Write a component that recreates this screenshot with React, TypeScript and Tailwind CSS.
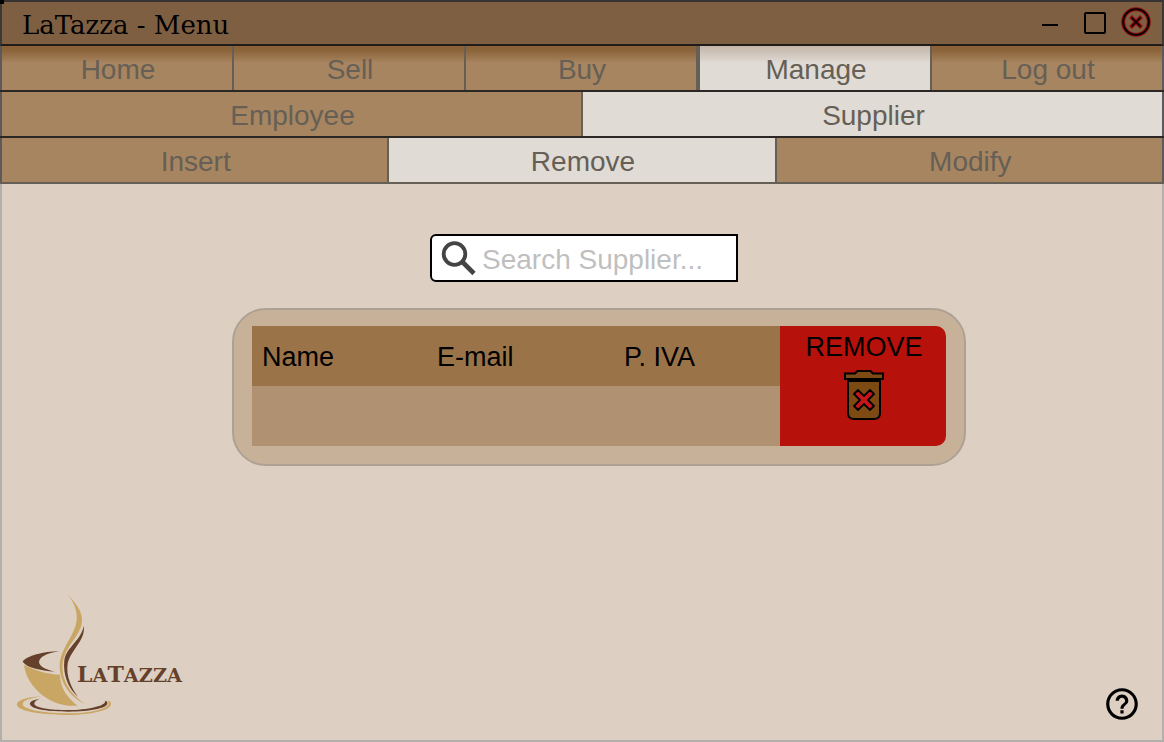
import type { ReactNode } from "react";
import { MdHelpOutline } from "react-icons/md";

type TabProps = {
  label: string;
  active?: boolean;
  shaded?: boolean;
  edge?: "left" | "right" | "none";
};

function Tab({ label, active = false, shaded = false, edge = "none" }: TabProps) {
  const fill = active ? "bg-[#e0dbd5]" : "bg-[#a78560]";
  const shade = !shaded
    ? ""
    : active
      ? "bg-[linear-gradient(to_bottom,#c7b8ab_0px,#cbbfb4_5px,#e0dbd5_17px)]"
      : "bg-[linear-gradient(to_bottom,#8a6136_0px,#8d653b_5px,#a78560_17px)]";
  const border =
    edge === "left" ? "border-l-2" : edge === "right" ? "border-r-2" : "";
  return (
    <button
      type="button"
      aria-pressed={active}
      className={`h-11 min-w-0 flex-1 border-[#665f56] pt-1 pl-0.5 text-center text-[28px] leading-10 text-[#665f56] ${fill} ${shade} ${border}`}
    >
      {label}
    </button>
  );
}

function TabRow({ last = false, children }: { last?: boolean; children: ReactNode }) {
  return (
    <div className={`border-b-2 ${last ? "border-[#665f56]" : "border-[#2b2725]"}`}>
      <div className="flex border-x-2 border-[#5c5a5a]">{children}</div>
    </div>
  );
}

function SearchIcon() {
  return (
    <svg width="46" height="44" viewBox="0 0 46 44" fill="none" stroke="#444" className="shrink-0" aria-hidden="true">
      <circle cx="18.500" cy="18" r="10.800" strokeWidth="3.800" />
      <path d="M26.500 26L38 37.500" strokeWidth="4.600" />
    </svg>
  );
}

function TrashIcon() {
  return (
    <svg width="42" height="52" viewBox="0 0 42 52" fill="#7c4a12" stroke="#000" strokeWidth="2" aria-hidden="true">
      <path d="M2 4.500H12L14.500 2H27.500L30 4.500H40V10H2Z" />
      <path d="M5 12H37V44Q37 50 31 50H11Q5 50 5 44Z" />
      <path
        d="M11 25L15 21L21 27L27 21L31 25L25 31L31 37L27 41L21 35L15 41L11 37L17 31Z"
        fill="#c4161c"
        strokeWidth="1.800"
      />
    </svg>
  );
}

function CloseIcon() {
  return (
    <svg width="30" height="30" viewBox="0 0 30 30" fill="none" aria-hidden="true">
      <circle cx="15" cy="15" r="12.800" stroke="#8e0c0c" strokeWidth="4" />
      <circle cx="15" cy="15" r="12.800" stroke="#000" strokeWidth="1.800" />
      <path d="M9.500 9.500L20.500 20.500M20.500 9.500L9.500 20.500" stroke="#8e0c0c" strokeWidth="4" />
      <path d="M10.500 10.500L19.500 19.500M19.500 10.500L10.500 19.500" stroke="#000" strokeWidth="1.500" />
    </svg>
  );
}

function Logo() {
  return (
    <svg width="168" height="123" viewBox="48 24 504 369" role="img" aria-label="LaTazza">
      <g fill="#c9a664">
        <path d="M202 26C224 52 248 76 246 107C244 152 194 182 188 235C183 290 215 330 256 358C208 335 178 290 179 240C181 190 226 150 230 105C233 75 220 50 202 26Z" />
        <path d="M72 240C110 258 140 268 180 269C180 310 205 340 232 362C190 365 150 352 115 320C90 295 76 270 72 240Z" />
        <path d="M125 334C70 338 50 348 51 360C55 380 130 390 205 390C280 389 333 375 333 357C333 350 328 347 323 347C340 370 275 385 200 385C120 384 68 372 68 357C68 347 90 340 125 334Z" />
      </g>
      <g fill="#65402a">
        <path d="M251 122C258 165 215 190 203 235C197 275 215 310 234 336C205 310 188 270 193 225C200 185 245 165 251 122Z" />
        <path d="M68 230C80 212 130 200 178 198C140 205 118 215 117 232C118 245 140 255 165 260C120 256 80 248 68 230Z" />
        <path d="M120 341C95 345 88 352 90 358C95 374 150 380 205 380C270 380 322 370 322 355C322 350 320 347 315 347C322 362 260 375 205 375C150 375 104 368 103 356C103 350 108 345 120 341Z" />
        <text x="231" y="291" fontFamily="'DejaVu Serif', serif" fontWeight="700" fontSize="58">
          <tspan fontSize="66">L</tspan>A<tspan fontSize="66">T</tspan>AZZA
        </text>
      </g>
    </svg>
  );
}

export default function App() {
  return (
    <div className="relative flex min-h-screen flex-col bg-[#ddcfc2] font-['Liberation_Sans',Arial,sans-serif] text-black">
      <span className="absolute top-0 left-0 size-1 bg-black" />
      <header className="flex h-[46px] items-center justify-between border-2 border-t-[#353433] border-r-[#3b3938] border-b-[#211c19] border-l-[#3b3938] bg-[#7f5f42] pr-[11px] pl-5">
        <h1 className="pt-1 font-['DejaVu_Serif',serif] text-[26px] leading-8">LaTazza - Menu</h1>
        <div className="flex items-center">
          <button type="button" aria-label="Minimize" className="mr-[26px] flex h-6 w-4 items-center">
            <span className="mt-1 h-0.5 w-full bg-black" />
          </button>
          <button type="button" aria-label="Maximize" className="mr-[15px] size-[22px] rounded-xs border-2 border-black" />
          <button type="button" aria-label="Close" className="pb-0.5">
            <CloseIcon />
          </button>
        </div>
      </header>

      <nav aria-label="Sections">
        <TabRow>
          <Tab label="Home" shaded edge="right" />
          <Tab label="Sell" shaded edge="right" />
          <Tab label="Buy" shaded edge="right" />
          <Tab label="Manage" shaded active edge="left" />
          <Tab label="Log out" shaded edge="left" />
        </TabRow>
        <TabRow>
          <Tab label="Employee" edge="right" />
          <Tab label="Supplier" active />
        </TabRow>
        <TabRow last>
          <Tab label="Insert" edge="right" />
          <Tab label="Remove" active edge="right" />
          <Tab label="Modify" />
        </TabRow>
      </nav>

      <main className="flex flex-1 flex-col items-center border-2 border-t-0 border-[#b3afad] pt-[50px]">
        <label className="ml-1 flex h-12 w-[308px] items-center rounded-l-md border-2 border-black bg-white pl-1">
          <SearchIcon />
          <input
            type="text"
            aria-label="Search Supplier"
            placeholder="Search Supplier..."
            className="w-full min-w-0 bg-transparent pt-1 text-[28px] leading-9 outline-none placeholder:text-[#bfbfbf]"
          />
        </label>

        <section className="mt-[26px] ml-[34px] w-[734px] max-w-full rounded-[34px] border-2 border-[#ada195] bg-[#c7b299] px-[18px] pt-4 pb-[18px]">
          <table className="w-full table-fixed border-collapse text-[27px] leading-8">
            <colgroup>
              <col className="w-[175px]" />
              <col className="w-[187px]" />
              <col className="w-[166px]" />
              <col className="w-[166px]" />
            </colgroup>
            <tbody>
              <tr className="h-[60px] text-left">
                <th scope="col" className="bg-[#9a7349] px-2.5 pt-0.5 pb-0 font-normal">Name</th>
                <th scope="col" className="bg-[#9a7349] px-2.5 pt-0.5 pb-0 font-normal">E-mail</th>
                <th scope="col" className="bg-[#9a7349] px-2.5 pt-0.5 pb-0 font-normal">P. IVA</th>
                <td rowSpan={2} className="p-0 align-top">
                  <button
                    type="button"
                    className="flex h-[120px] w-full flex-col items-center gap-1.5 rounded-r-[10px] bg-[#b6110b] pt-[5px] pl-0.5"
                  >
                    REMOVE
                    <TrashIcon />
                  </button>
                </td>
              </tr>
              <tr className="h-[60px] bg-[#b09172]">
                <td />
                <td />
                <td />
              </tr>
            </tbody>
          </table>
        </section>

        <footer className="mt-auto flex w-full items-end justify-between pr-[21px] pb-[17px] pl-3.5">
          <div className="pb-[7px]">
            <Logo />
          </div>
          <button type="button" aria-label="Help">
            <MdHelpOutline size={38} />
          </button>
        </footer>
      </main>
    </div>
  );
}
